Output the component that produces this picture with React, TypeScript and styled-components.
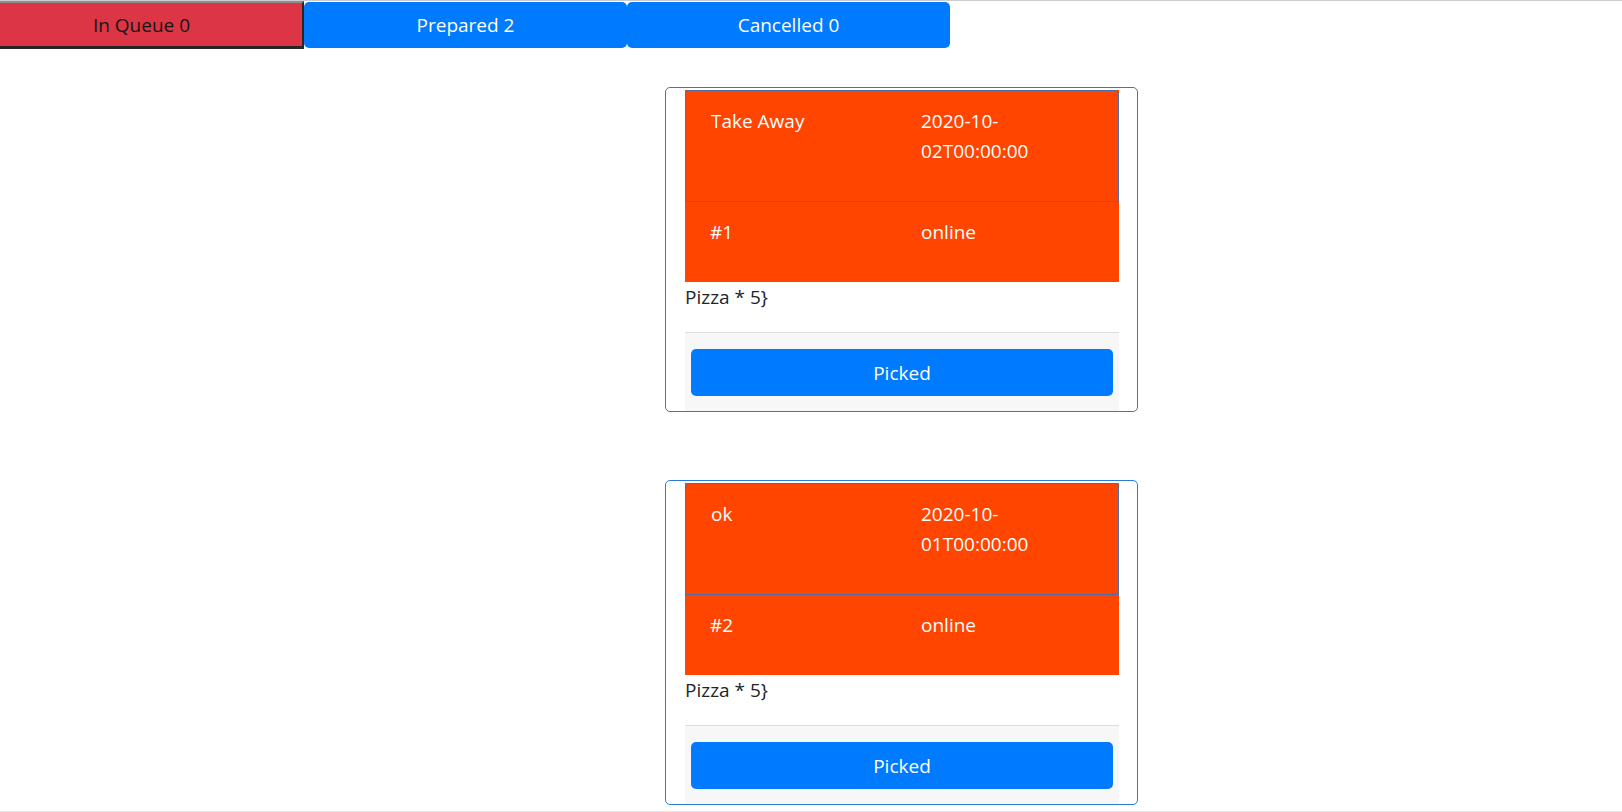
import styled, { createGlobalStyle } from "styled-components";

const GlobalStyle = createGlobalStyle`
    body {
        margin: 0;
        font-family: "Segoe UI", "Open Sans", "Noto Sans", sans-serif;
        font-size: 19px;
        color: #212529;
        background: #fff;
    }
`;

const Page = styled.div`
    height: 812px;
    box-sizing: border-box;
    border-top: 1px solid #cdcdcd;
    border-bottom: 1px solid #e6e6e6;
    overflow: hidden;
    display: flex;
    flex-direction: column;
`;

const TabBar = styled.div`
    display: flex;
    align-items: flex-start;
`;

// the active tab sticks out past the left edge of the window
const TabButton = styled.button<{ $active?: boolean }>`
    box-sizing: border-box;
    flex: none;
    font-family: inherit;
    font-size: 19px;
    line-height: 30px;
    cursor: pointer;
    ${(p) =>
        p.$active
            ? `
        width: 323px;
        margin-left: -19px;
        height: 48px;
        background: #dc3545;
        color: #151515;
        border: none;
        border-top: 2px solid #8e8e8e;
        border-right: 2px solid #262626;
        border-bottom: 3px solid #262626;
    `
            : `
        width: 323px;
        height: 46px;
        margin-top: 1px;
        background: #007bff;
        color: #fff;
        border: none;
        border-radius: 5px;
    `}
`;

const OrderList = styled.div`
    display: flex;
    flex-direction: column;
    gap: 68px;
    padding: 38px 0 0 665px;
`;

const Card = styled.div`
    width: 473px;
    box-sizing: border-box;
    border: 1px solid #2a7bd3;
    border-radius: 5px;
    padding: 2px 18px 0 19px;
`;

const InfoTable = styled.div`
    background: #ff4500;
    color: #fff;
`;

const InfoRow = styled.div<{ $bordered?: boolean }>`
    display: grid;
    grid-template-columns: ${(p) => (p.$bordered ? "210px" : "211px")} 1fr;
    ${(p) =>
        p.$bordered &&
        `
        border: 1px solid #4a6ea8;
        border-radius: 4px 4px 0 0;
    `}
`;

const Cell = styled.div`
    padding: 15px 25px;
`;

const CellText = styled.p`
    margin: 0 0 20px;
    line-height: 30px;
`;

const Items = styled.p`
    margin: 0 0 20px;
    line-height: 30px;
`;

const Footer = styled.div`
    background: #f7f7f7;
    border-top: 1px solid #dcdcdc;
    padding: 16px 6px 15px;
`;

const PickButton = styled.button`
    width: 100%;
    height: 47px;
    border: none;
    border-radius: 5px;
    background: #007bff;
    color: #fff;
    font-family: inherit;
    font-size: 19px;
    cursor: pointer;
`;

const orders = [
    { name: "Take Away", date: "2020-10-02T00:00:00", id: 1, source: "online", items: "Pizza * 5}" },
    { name: "ok", date: "2020-10-01T00:00:00", id: 2, source: "online", items: "Pizza * 5}" },
];

export default function App() {
    return (
        <Page>
            <GlobalStyle />
            <TabBar>
                <TabButton $active>In Queue 0</TabButton>
                <TabButton>Prepared 2</TabButton>
                <TabButton>Cancelled 0</TabButton>
            </TabBar>
            <OrderList>
                {orders.map((o) => (
                    <Card key={o.id}>
                        <InfoTable>
                            <InfoRow $bordered>
                                <Cell>
                                    <CellText>{o.name}</CellText>
                                </Cell>
                                <Cell>
                                    <CellText>{o.date}</CellText>
                                </Cell>
                            </InfoRow>
                            <InfoRow>
                                <Cell>
                                    <CellText>#{o.id}</CellText>
                                </Cell>
                                <Cell>
                                    <CellText>{o.source}</CellText>
                                </Cell>
                            </InfoRow>
                        </InfoTable>
                        <Items>{o.items}</Items>
                        <Footer>
                            <PickButton>Picked</PickButton>
                        </Footer>
                    </Card>
                ))}
            </OrderList>
        </Page>
    );
}
